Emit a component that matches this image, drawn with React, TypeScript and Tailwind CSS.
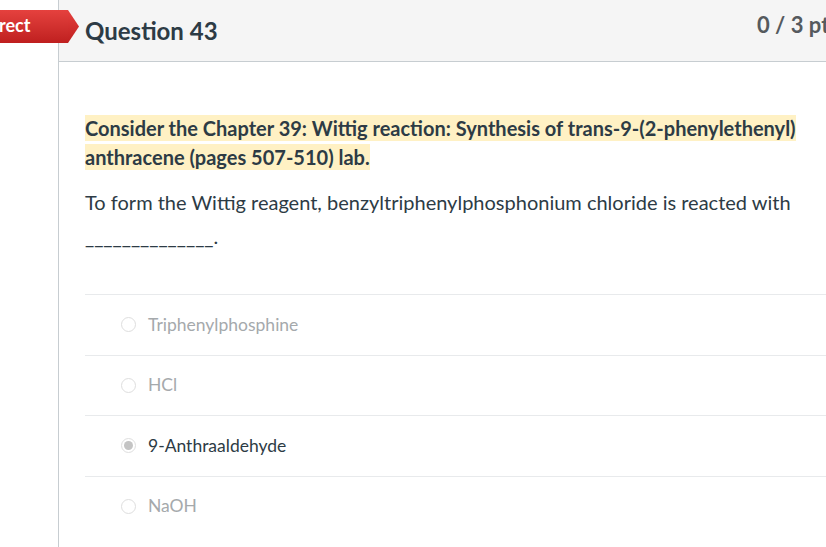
import React from 'react';

const answers = [
  { label: 'Triphenylphosphine', selected: false },
  { label: 'HCl', selected: false },
  { label: '9-Anthraaldehyde', selected: true },
  { label: 'NaOH', selected: false },
];

function Radio({ selected }: { selected: boolean }) {
  return (
    <span className="flex h-[15px] w-[15px] shrink-0 items-center justify-center rounded-full border border-[#dedede] bg-white">
      {selected && <span className="h-[9px] w-[9px] rounded-full bg-[#c4c4c4]" />}
    </span>
  );
}

export default function App() {
  return (
    <div className="h-[547px] w-[826px] overflow-hidden bg-white font-['Lato','Noto_Sans',sans-serif] text-[#2d3b45]">
      <div className="relative flex h-full w-[900px]">
        {/* incorrect banner */}
        <div className="absolute left-0 top-[10px] z-10 flex h-[33px] items-center">
          <div className="flex h-full w-[68px] items-center bg-gradient-to-b from-[#e5413e] to-[#bf1f1f] text-[18px] font-bold leading-none text-white">
            <span className="-ml-[1px] mt-[-3px]">rect</span>
          </div>
          <svg width="11" height="33" viewBox="0 0 11 33" className="block">
            <defs>
              <linearGradient id="bg" x1="0" y1="0" x2="0" y2="1">
                <stop offset="0" stopColor="#e5413e" />
                <stop offset="1" stopColor="#bf1f1f" />
              </linearGradient>
            </defs>
            <polygon points="0,0 0,33 11,16.5" fill="url(#bg)" />
          </svg>
        </div>

        <div className="w-[59px] shrink-0 border-r border-[#c7cdd1]" />

        <div className="flex-1">
          <div className="flex h-[62px] items-center border-b border-[#c7cdd1] bg-[#f5f5f5] pl-[26px]">
            <h2 className="mt-[1px] w-[672px] text-[24px] font-bold">Question 43</h2>
            <span className="mb-[12px] text-[22px] font-bold text-[#555a5e]">0 / 3 pts</span>
          </div>

          <div className="w-[740px] pl-[26px] pt-[52px]">
            <p className="text-[20px] font-bold leading-[29px]">
              <span className="bg-[#fff1c4] py-[1px]">
                Consider the Chapter 39: Wittig reaction: Synthesis of trans-9-(2-phenylethenyl) anthracene (pages 507-510) lab.
              </span>
            </p>
            <p className="mt-[13px] text-[20px] leading-[34px]">
              To form the Wittig reagent, benzyltriphenylphosphonium chloride is reacted with ______________.
            </p>

            <div className="mt-[41px] w-[800px]">
              {answers.map((a) => (
                <div
                  key={a.label}
                  className="flex h-[60.6px] items-center border-t border-[#e8eaec] pl-[36px]"
                >
                  <Radio selected={a.selected} />
                  <span
                    className={
                      'ml-[12px] text-[17.5px] ' +
                      (a.selected ? 'text-[#2d3b45]' : 'text-[#a5a9ac]')
                    }
                  >
                    {a.label}
                  </span>
                </div>
              ))}
            </div>
          </div>
        </div>
      </div>
    </div>
  );
}
